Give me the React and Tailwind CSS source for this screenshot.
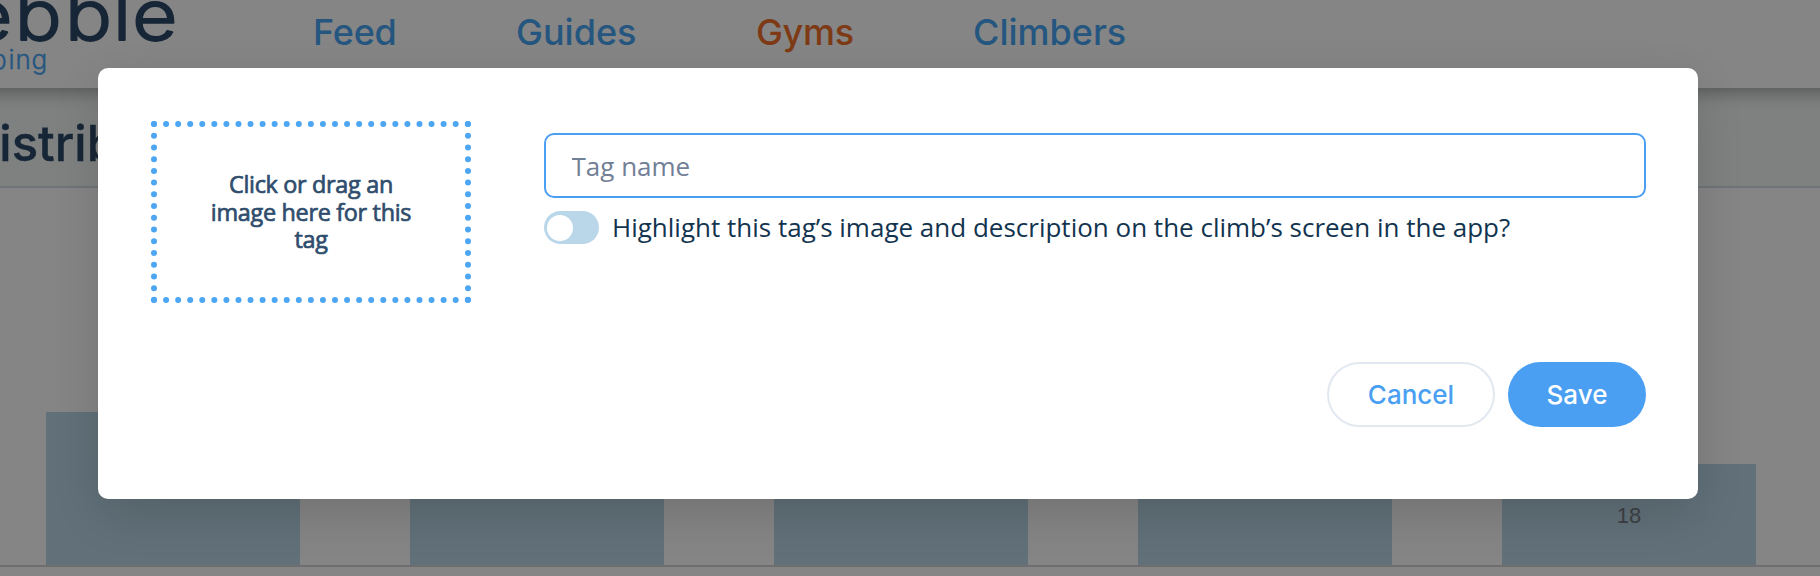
const NAV = [
  { label: "Feed", box: "ml-[313px] w-[203px] text-[#48a5f5] tracking-[-0.2px]" },
  { label: "Guides", box: "w-[240px] text-[#48a5f5]" },
  { label: "Gyms", box: "w-[217px] text-[#f0702a] tracking-[-0.3px]" },
  { label: "Climbers", box: "text-[#48a5f5]" },
];

const BARS = [
  { height: "h-[153px]" },
  { height: "h-[130px]" },
  { height: "h-[120px]" },
  { height: "h-[110px]" },
  { height: "h-[101px]", count: 18 },
];

function Logo() {
  return (
    <svg className="absolute left-0 top-0 h-[88px] w-[190px]" viewBox="0 0 190 88">
      <g
        fill="#2d4a69"
        stroke="#2d4a69"
        strokeWidth="1.8"
        strokeLinejoin="round"
        fontFamily="Inter, sans-serif"
        fontWeight="300"
        fontSize="69"
        transform="scale(1.13 1)"
      >
        <text y="40" x="-29 13 57.5 100 117">ebble</text>
      </g>
      <text
        y="69"
        x="-9 8.5 15.5 31.5"
        fill="#48a5f5"
        stroke="#48a5f5"
        strokeWidth="0.4"
        fontFamily="Inter, sans-serif"
        fontWeight="300"
        fontSize="26"
      >
        ping
      </text>
    </svg>
  );
}

function Page() {
  return (
    <div className="flex h-[576px] w-full flex-col overflow-hidden bg-white">
      <header className="relative z-10 -mx-[40px] flex h-[88px] shrink-0 bg-white px-[40px] shadow-[0_2px_20px_rgba(0,0,0,0.4)]">
        <div className="relative w-0">
          <Logo />
        </div>
        <nav className="flex h-[64px] items-center font-['Inter'] text-[36px] font-medium">
          {NAV.map((n) => (
            <a key={n.label} className={n.box}>
              {n.label}
            </a>
          ))}
        </nav>
      </header>
      <div className="flex h-[100px] shrink-0 items-center border-b-2 border-[#d5dee6] bg-[#f3f8f6]">
        <h1 className="-ml-[36px] mt-[13px] font-['Inter'] text-[49px] font-medium whitespace-nowrap text-[#2d4a69] [-webkit-text-stroke:0.4px_#2d4a69]">
          Distribution
        </h1>
      </div>
      <div className="flex h-[379px] shrink-0 items-end gap-[110px] border-b-2 border-[#d4d4d4] pl-[46px]">
        {BARS.map((b, i) => (
          <div key={i} className={`w-[254px] shrink-0 bg-[#bad6e8] pt-[37px] ${b.height}`}>
            {b.count && (
              <div className="text-center font-['Liberation_Sans'] text-[22px] leading-[30px] text-[#757b82]">
                {b.count}
              </div>
            )}
          </div>
        ))}
      </div>
    </div>
  );
}

function TagDialog() {
  return (
    <div
      role="dialog"
      className="mt-[68px] ml-[98px] flex h-[431px] w-[1600px] flex-col rounded-[10px] bg-white px-[52px] pt-[53px] shadow-[0_16px_50px_-4px_rgba(0,0,0,0.16)]"
    >
      <div className="flex items-start justify-between">
        <div className="ml-px flex h-[182px] w-[320px] items-center justify-center border-[6px] border-dotted border-[#4da6f2] px-[40px] pt-px text-center font-['Open_Sans'] text-[23.4px] leading-[27.5px] tracking-[-0.3px] text-[#2f4d6d] [-webkit-text-stroke:0.7px_#2f4d6d]">
          Click or drag an image here for this tag
        </div>
        <div className="mt-[12px] w-[1102px]">
          <input
            className="block h-[65px] w-full rounded-[10px] border-2 border-[#4a9ff2] px-[25.5px] font-['Open_Sans'] text-[26px] outline-none placeholder:text-[#718096]"
            placeholder="Tag name"
          />
          <div className="mt-[13px] flex h-[33px] items-center gap-[13px]">
            <span className="flex h-[33px] w-[55px] items-center rounded-full bg-[#bad6e9] pl-[3px]">
              <span className="size-[26px] rounded-full bg-white" />
            </span>
            <span className="font-['Open_Sans'] text-[26px] whitespace-nowrap text-[#12344f]">
              Highlight this tag’s image and description on the climb’s screen in the app?
            </span>
          </div>
        </div>
      </div>
      <div className="mt-[59px] flex justify-end gap-[13px] font-['Inter'] text-[26px] font-medium">
        <button className="h-[65px] w-[168px] rounded-full border-2 border-[#e2e8f0] text-[#4a9ff2]">
          Cancel
        </button>
        <button className="h-[65px] w-[138px] rounded-full bg-[#4a9ff2] text-white">Save</button>
      </div>
    </div>
  );
}

export default function App() {
  return (
    <div className="relative h-[576px] overflow-hidden">
      <Page />
      <div className="absolute inset-0 z-20 flex items-start bg-black/48">
        <TagDialog />
      </div>
    </div>
  );
}
